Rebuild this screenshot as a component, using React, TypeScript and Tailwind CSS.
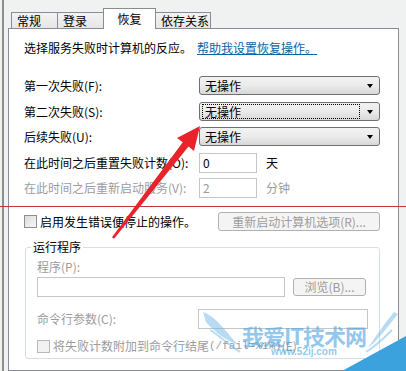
import React from 'react';

const font = { fontFamily: '"Noto Sans CJK SC", "Microsoft YaHei", sans-serif' };

function Tab({ label, active = false, width }: { label: string; active?: boolean; width: string }) {
  return active ? (
    <div
      className={`${width} relative z-10 -mb-px flex h-[21px] items-start justify-center border border-b-0 border-[#898c95] bg-white pt-[1px] text-[12px] text-black`}
    >
      {label}
    </div>
  ) : (
    <div
      className={`${width} flex h-[16px] items-center justify-start border border-b-0 border-[#898c95] bg-gradient-to-b from-[#f3f3f3] to-[#e6e6e6] pl-[5px] text-[12px] leading-none text-black`}
    >
      {label}
    </div>
  );
}

function Select({ focused = false }: { focused?: boolean }) {
  return (
    <div className="flex h-[19px] w-[181px] items-center rounded-[3px] border border-[#707070] bg-gradient-to-b from-[#f2f2f2] via-[#ebebeb] to-[#d8d8d8] px-[2px]">
      <div
        className={`flex h-[15px] w-[158px] items-center pl-[2px] text-[12px] leading-none ${
          focused ? 'border border-dotted border-black' : 'border border-transparent'
        }`}
      >
        无操作
      </div>
      <div className="ml-auto mr-[4px] h-0 w-0 border-x-[3.5px] border-t-[4px] border-x-transparent border-t-black" />
    </div>
  );
}

function TextBox({ value, disabled = false, w }: { value?: string; disabled?: boolean; w: string }) {
  return (
    <div
      className={`${w} flex h-[20px] items-center border border-[#c3c6cb] bg-white pl-[3px] text-[12px] ${
        disabled ? 'text-[#9c9c9c]' : 'text-black'
      }`}
    >
      {value}
    </div>
  );
}

function Check({ disabled = false }: { disabled?: boolean }) {
  return (
    <div
      className={`h-[13px] w-[13px] shrink-0 border ${
        disabled ? 'border-[#b8b8b8] bg-[#f2f2f2]' : 'border-[#8e8f8f] bg-gradient-to-br from-[#dcdcdc] to-[#f7f7f7]'
      }`}
    />
  );
}

export default function App() {
  return (
    <div className="relative h-[371px] w-[406px] overflow-hidden bg-[#f0f1f1] pl-[2px]" style={font}>
      <div className="flex h-full flex-col border-l-2 border-[#8c8d8d] pl-[4px] pr-[7px]">
        {/* tabs */}
        <div className="flex h-[28px] items-end pl-[3px]">
          <Tab label="常规" width="w-[47px]" />
          <Tab label="登录" width="w-[47px] -ml-px" />
          <Tab label="恢复" width="w-[53px] -ml-px" active />
          <Tab label="依存关系" width="w-[56px] -ml-px" />
        </div>

        {/* panel */}
        <div className="flex-1 border border-[#898c95] bg-white pl-[15px] text-[12px] text-black">
          <div className="mt-[10px] flex h-[18px] items-center">
            <span>选择服务失败时计算机的反应。</span>
            <span className="ml-[5px] text-[#0a64a4] underline">帮助我设置恢复操作。</span>
          </div>

          <div className="mt-[19px] flex flex-col gap-[7px]">
            <div className="flex items-center">
              <span className="w-[175px]">第一次失败(F):</span>
              <Select />
            </div>
            <div className="flex items-center">
              <span className="w-[175px]">第二次失败(S):</span>
              <Select focused />
            </div>
            <div className="-mt-[1px] flex items-center">
              <span className="w-[175px]">后续失败(U):</span>
              <Select />
            </div>
          </div>

          <div className="mt-[7px] flex flex-col gap-[5px]">
            <div className="flex items-center">
              <span className="w-[175px]">在此时间之后重置失败计数(O):</span>
              <TextBox value="0" w="w-[58px]" />
              <span className="ml-[9px]">天</span>
            </div>
            <div className="flex items-center text-[#9c9c9c]">
              <span className="w-[175px]">在此时间之后重新启动服务(V):</span>
              <TextBox value="2" w="w-[58px]" disabled />
              <span className="ml-[9px]">分钟</span>
            </div>
          </div>

          <div className="mt-[14px] flex items-center">
            <div className="flex w-[194px] items-center">
              <Check />
              <span className="ml-[3px]">启用发生错误便停止的操作。</span>
            </div>
            <div className="flex h-[19px] w-[162px] items-center justify-center rounded-[3px] border border-[#adb2b5] bg-[#f4f4f4] text-[#9c9c9c]">
              重新启动计算机选项(R)...
            </div>
          </div>

          {/* group box */}
          <div className="relative ml-px mt-[16px] h-[112px] w-[355px] rounded-[3px] border border-[#d5dfe5] pl-[11px] pr-[11px]">
            <span className="absolute -top-[10px] left-[5px] bg-white px-[2px] leading-[18px]">运行程序</span>
            <div className="mt-[10px] text-[#9c9c9c]">程序(P):</div>
            <div className="mt-[1px] flex items-center">
              <TextBox w="w-[248px]" />
              <div className="ml-[8px] flex h-[18px] w-[73px] items-center justify-center rounded-[3px] border border-[#adb2b5] bg-[#f4f4f4] text-[#9c9c9c]">
                浏览(B)...
              </div>
            </div>
            <div className="mt-[12px] flex items-center">
              <span className="w-[161px] text-[#9c9c9c]">命令行参数(C):</span>
              <TextBox w="w-[170px]" />
            </div>
            <div className="mt-[8px] flex items-center text-[#9c9c9c]">
              <Check disabled />
              <span className="ml-[3px]">将失败计数附加到命令行结尾</span>
              <span className="text-[11px]" style={{ fontFamily: '"Liberation Mono", monospace' }}>
                (/fail=%1%)
              </span>
              <span>(E)</span>
            </div>
          </div>
        </div>
      </div>

      {/* red annotation line */}
      <div className="absolute left-0 top-[206px] h-px w-full bg-[#c4333a]" />

      {/* red arrow */}
      <svg className="pointer-events-none absolute left-0 top-0" width="406" height="371">
        <polygon
          points="200,126 194,151 188.5,146.5 114,238.8 112,237.2 182.8,142.2 177,138"
          fill="#e8232a"
        />
      </svg>

      {/* watermark */}
      <svg className="pointer-events-none absolute left-0 top-0" width="406" height="371">
        <path d="M203 312 C218 318 226 332 238 345 C226 340 214 332 206 322 Z" fill="#6fb8e6" opacity="0.5" />
        <path d="M210 330 C220 336 230 346 240 352" stroke="#6fb8e6" strokeWidth="2" fill="none" opacity="0.5" />
        <path d="M398 314 C388 326 380 338 368 348 C376 336 384 324 394 312 Z" fill="#6fb8e6" opacity="0.5" />
        <path d="M392 330 C384 338 376 346 366 352" stroke="#6fb8e6" strokeWidth="2" fill="none" opacity="0.5" />
        <polygon points="342,371 406,336 406,371" fill="#3ba2de" />
      </svg>
      <div className="pointer-events-none absolute left-[240px] top-[323px] flex w-[128px] flex-col items-center">
        <span className="text-[22px] font-bold leading-[24px] tracking-[-1px] text-[#4aa3e0]/60">我爱IT技术网</span>
        <span
          className="-mt-[1px] text-[10px] font-bold leading-[12px] text-[#4aa3e0]/60"
          style={{ fontFamily: 'Arial, "Liberation Sans", sans-serif' }}
        >
          www.52ij.com
        </span>
      </div>
    </div>
  );
}
